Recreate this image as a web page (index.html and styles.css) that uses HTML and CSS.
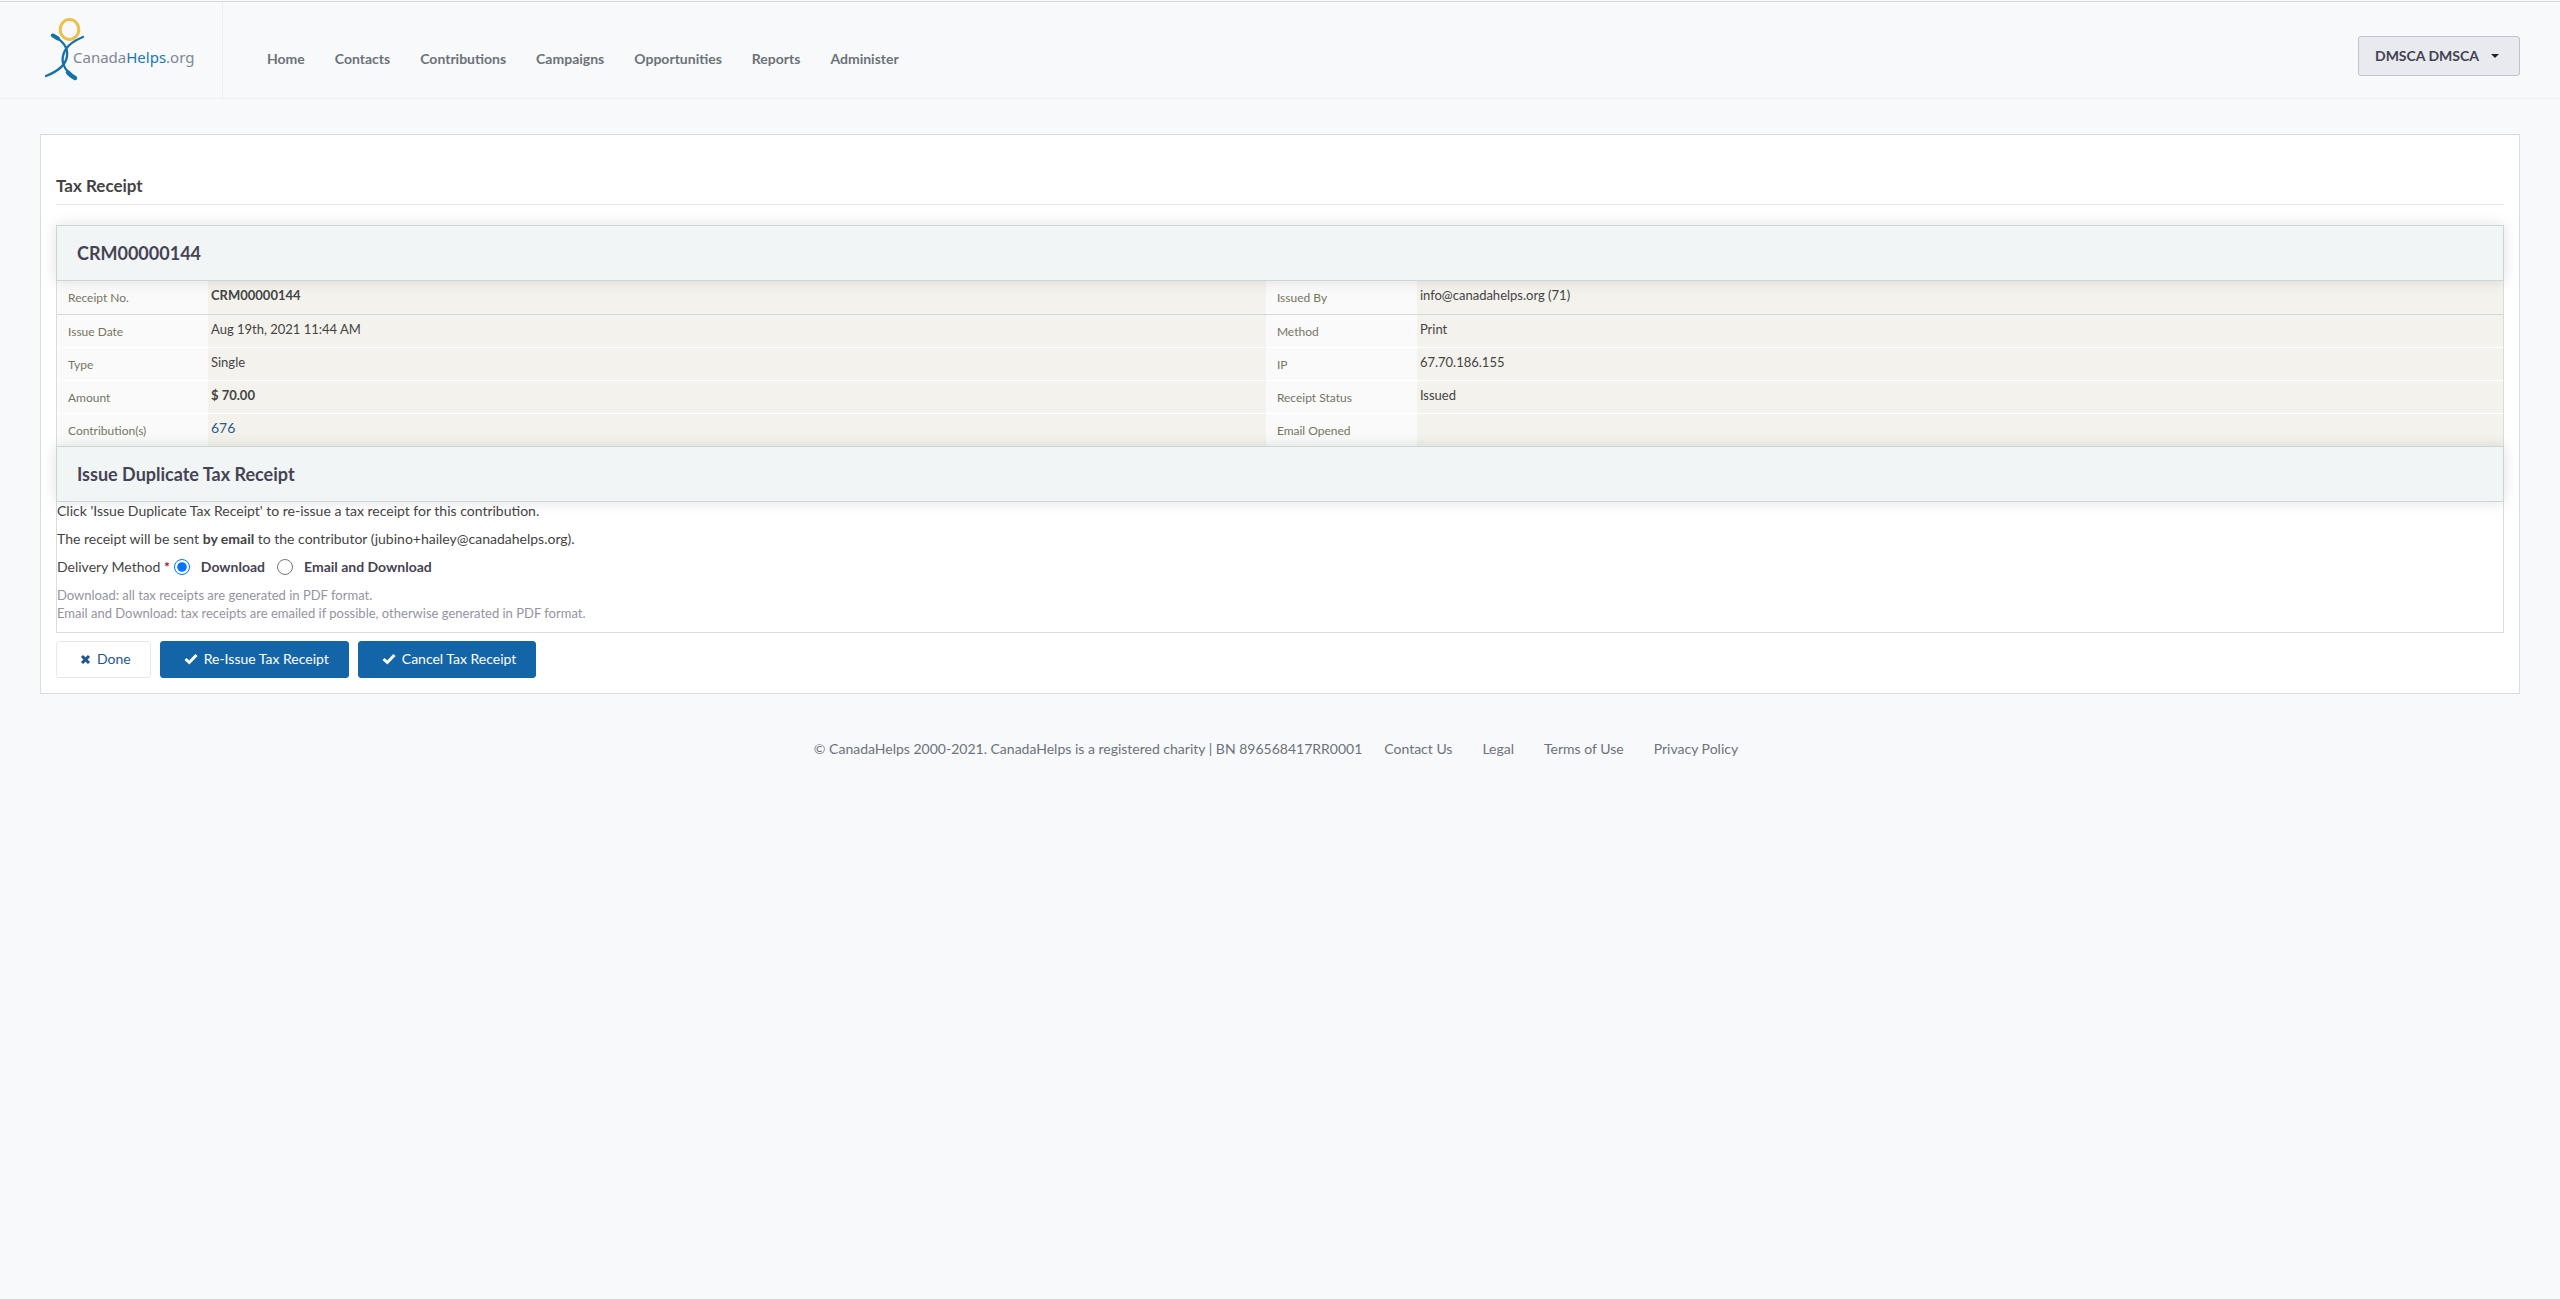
FILE: index.html
```html
<!DOCTYPE html>
<html lang="en">
<head>
    <meta charset="UTF-8">
    <meta name="viewport" content="width=device-width, initial-scale=1.0">
    <title>Tax Receipt</title>
    <link rel="stylesheet" href="styles.css">
</head>
<body>
    <header class="site-header">
        <a class="logo" href="#">
            <svg width="170" height="75" viewBox="0 0 170 75" role="img" aria-label="CanadaHelps.org">
                <ellipse cx="32.500" cy="16.500" rx="9.300" ry="10" fill="none" stroke="#ecc04e" stroke-width="3"/>
                <g fill="none" stroke="#1472a8" stroke-linecap="round">
                    <path d="M46 24 C36 28 28 33 26 43 C24 51 30 60 37 64" stroke-width="2.300"/>
                    <path d="M15 22 C26 28 31 34 30 43 C29 53 19 59 9 63" stroke-width="2.300"/>
                    <path d="M16 22.500 L21 25.500" stroke-width="4"/>
                    <path d="M31 59.500 Q34 63 38 65" stroke-width="4.400"/>
                </g>
                <text x="36" y="50" class="logo-text">Canada<tspan class="logo-blue">Helps</tspan>.org</text>
            </svg>
        </a>
        <nav class="main-nav">
            <a href="#">Home</a>
            <a href="#">Contacts</a>
            <a href="#">Contributions</a>
            <a href="#">Campaigns</a>
            <a href="#">Opportunities</a>
            <a href="#">Reports</a>
            <a href="#">Administer</a>
        </nav>
        <button type="button" class="user-menu">DMSCA DMSCA <span class="caret"></span></button>
    </header>

    <main class="panel">
        <h1>Tax Receipt</h1>

        <form id="receiptForm">
            <div class="receipt">
                <h2 class="section-title">CRM00000144</h2>
                <table class="receipt-table">
                    <colgroup>
                        <col class="col-label">
                        <col class="col-value">
                        <col class="col-label">
                        <col>
                    </colgroup>
                    <tbody>
                        <tr class="first-row">
                            <th scope="row">Receipt No.</th>
                            <td><strong>CRM00000144</strong></td>
                            <th scope="row">Issued By</th>
                            <td>info@canadahelps.org (71)</td>
                        </tr>
                        <tr>
                            <th scope="row">Issue Date</th>
                            <td>Aug 19th, 2021 11:44 AM</td>
                            <th scope="row">Method</th>
                            <td>Print</td>
                        </tr>
                        <tr>
                            <th scope="row">Type</th>
                            <td>Single</td>
                            <th scope="row">IP</th>
                            <td>67.70.186.155</td>
                        </tr>
                        <tr>
                            <th scope="row">Amount</th>
                            <td><strong>$ 70.00</strong></td>
                            <th scope="row">Receipt Status</th>
                            <td>Issued</td>
                        </tr>
                        <tr>
                            <th scope="row">Contribution(s)</th>
                            <td><a class="contribution" href="#">676</a></td>
                            <th scope="row">Email Opened</th>
                            <td></td>
                        </tr>
                    </tbody>
                </table>

                <h2 class="section-title">Issue Duplicate Tax Receipt</h2>
                <div class="duplicate">
                    <p>Click 'Issue Duplicate Tax Receipt' to re-issue a tax receipt for this contribution.</p>
                    <p>The receipt will be sent <strong>by email</strong> to the contributor (jubino+hailey@canadahelps.org).</p>
                    <div class="delivery" role="radiogroup" aria-labelledby="deliveryLabel">
                        <span id="deliveryLabel">Delivery Method <span class="required">*</span></span>
                        <input type="radio" id="download" name="delivery" checked>
                        <label for="download">Download</label>
                        <input type="radio" id="emailDownload" name="delivery">
                        <label for="emailDownload">Email and Download</label>
                    </div>
                    <p class="description">Download: all tax receipts are generated in PDF format.<br>
                    Email and Download: tax receipts are emailed if possible, otherwise generated in PDF format.</p>
                </div>
            </div>

            <div class="buttons">
                <button type="button" class="btn btn-done">
                    <svg width="11" height="11" viewBox="0 0 11 11" aria-hidden="true"><path d="M2 2 L9 9 M9 2 L2 9" fill="none" stroke="currentColor" stroke-width="3"/></svg>
                    Done
                </button>
                <button type="button" class="btn btn-primary">
                    <svg width="14" height="12" viewBox="0 0 14 12" aria-hidden="true"><path d="M1.500 6 L5.300 9.500 L12.500 2" fill="none" stroke="currentColor" stroke-width="3"/></svg>
                    Re-Issue Tax Receipt
                </button>
                <button type="button" class="btn btn-primary">
                    <svg width="14" height="12" viewBox="0 0 14 12" aria-hidden="true"><path d="M1.500 6 L5.300 9.500 L12.500 2" fill="none" stroke="currentColor" stroke-width="3"/></svg>
                    Cancel Tax Receipt
                </button>
            </div>
        </form>
    </main>

    <footer class="site-footer">
        <span class="copyright">© CanadaHelps 2000-2021. CanadaHelps is a registered charity | BN 896568417RR0001</span>
        <a href="#">Contact Us</a>
        <a href="#">Legal</a>
        <a href="#">Terms of Use</a>
        <a href="#">Privacy Policy</a>
    </footer>
</body>
</html>
```

FILE: styles.css
```css
* {
    box-sizing: border-box;
}
body {
    margin: 0;
    background-color: #f8f9fb;
    color: #444;
    font-family: Lato, sans-serif;
    font-size: 14px;
    line-height: 18px;
}
a {
    color: inherit;
    text-decoration: none;
}
button {
    font: inherit;
    cursor: pointer;
}

/* Header */
.site-header {
    display: flex;
    align-items: center;
    height: 98px;
    margin-top: 1px;
    padding-right: 40px;
    border-top: 1px solid #d5d9dc;
    border-bottom: 1px solid #eff0f2;
}
.logo {
    align-self: stretch;
    width: 223px;
    padding: 11px 0 0 37px;
    border-right: 1px solid #ebedef;
}
.logo svg {
    display: block;
    background-color: #f7f9fb;
}
.logo-text {
    font-family: "Noto Sans", sans-serif;
    font-size: 15px;
    fill: #7d8893;
}
.logo-blue {
    fill: #1878b2;
}
.main-nav {
    display: flex;
    flex: 1;
    gap: 30px;
    padding: 18px 0 0 44px;
    color: #6b7278;
    font-weight: bold;
}
.user-menu {
    display: flex;
    align-items: center;
    gap: 12px;
    height: 40px;
    margin-top: 12px;
    padding: 0 20px 0 16px;
    border: 1px solid #bfc3cc;
    border-radius: 3px;
    background-color: #e9eaf0;
    color: #3f434f;
    font-weight: bold;
}
.caret {
    border: 4px solid transparent;
    border-top-color: #222;
    border-bottom: 0;
}

/* Content panel */
.panel {
    margin: 35px 40px 0;
    padding: 39px 15px 15px;
    border: 1px solid #d9dcdd;
    background-color: #fff;
}
h1 {
    margin: 0 0 20px;
    padding-bottom: 7px;
    border-bottom: 1px solid #e6e8ea;
    font-size: 17px;
    line-height: 23px;
}
.receipt {
    border: 1px solid #d9dcdd;
}
.section-title {
    position: relative;
    margin: -1px -1px 0;
    padding: 16px 20px 15px;
    border: 1px solid #cdd6d7;
    background-color: #f1f5f6;
    box-shadow: 0 0 14px rgba(0, 0, 0, 0.12);
    color: #464354;
    font-size: 18px;
    line-height: 23px;
}
.receipt-table {
    width: 100%;
    border-collapse: collapse;
    table-layout: fixed;
}
.col-label {
    width: 151px;
}
.col-value {
    width: 43.25%;
}
.receipt-table th,
.receipt-table td {
    height: 33px;
    padding: 5px 3px;
    border-bottom: 1px solid #fff;
    background-color: #f3f2ed;
    font-size: 13px;
    text-align: left;
    vertical-align: top;
}
.receipt-table th {
    padding: 8px 11px 6px;
    background-color: #fafafa;
    color: #75755f;
    font-size: 12px;
    font-weight: normal;
}
.receipt-table .first-row th,
.receipt-table .first-row td {
    border-bottom-color: #d3d9da;
}
.contribution {
    color: #2a5d88;
    font-size: 14px;
}

/* Duplicate receipt */
.duplicate {
    padding-bottom: 10px;
}
.duplicate p {
    margin: 0 0 10px;
}
.delivery {
    display: flex;
    align-items: center;
    height: 18px;
    margin-bottom: 10px;
}
.delivery input {
    width: 16px;
    height: 16px;
    margin: 0 11px 0 4px;
}
.delivery label {
    margin-right: 8px;
    color: #464354;
    font-weight: bold;
}
.required {
    color: #b01030;
    font-weight: bold;
}
.duplicate .description {
    margin: 0;
    color: #9494a0;
    font-size: 13px;
}

/* Buttons */
.buttons {
    display: flex;
    gap: 9px;
    margin-top: 8px;
}
.btn {
    display: flex;
    align-items: center;
    gap: 6px;
    height: 37px;
    padding: 0 19px 0 23px;
    border: 1px solid #1465a8;
    border-radius: 3px;
}
.btn-done {
    border-color: #e6e8ec;
    background-color: #fff;
    color: #1f568f;
}
.btn-primary {
    background-color: #1465a8;
    color: #fff;
}

/* Footer */
.site-footer {
    display: flex;
    justify-content: center;
    gap: 30px;
    padding: 46px 8px 40px 0;
    color: #6c7279;
}
.copyright {
    margin-right: -8px;
}
```
